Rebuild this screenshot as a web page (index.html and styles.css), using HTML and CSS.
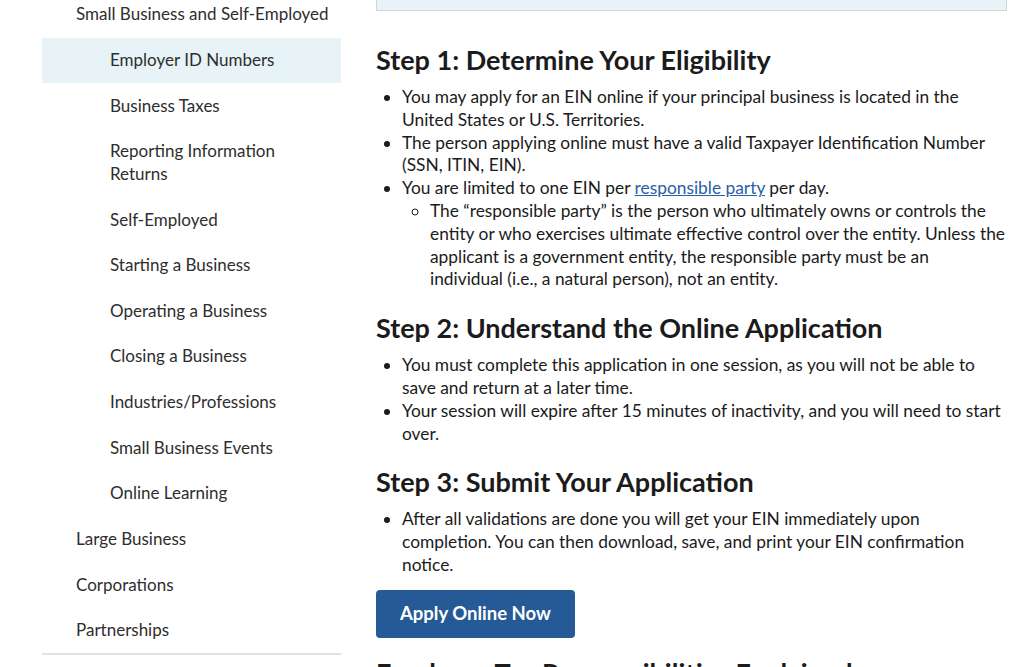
FILE: index.html
```html
<!DOCTYPE html>
<html lang="en">
<head>
    <meta charset="UTF-8">
    <meta name="viewport" content="width=device-width, initial-scale=1.0">
    <title>Employer ID Numbers</title>
    <link rel="stylesheet" href="styles.css">
</head>
<body>
    <div class="page">
        <nav class="sidenav">
            <ul>
                <li><a href="#">Small Business and Self-Employed</a>
                    <ul class="subnav">
                        <li class="current"><a href="#">Employer ID Numbers</a></li>
                        <li><a href="#">Business Taxes</a></li>
                        <li><a href="#">Reporting Information Returns</a></li>
                        <li><a href="#">Self-Employed</a></li>
                        <li><a href="#">Starting a Business</a></li>
                        <li><a href="#">Operating a Business</a></li>
                        <li><a href="#">Closing a Business</a></li>
                        <li><a href="#">Industries/Professions</a></li>
                        <li><a href="#">Small Business Events</a></li>
                        <li><a href="#">Online Learning</a></li>
                    </ul>
                </li>
                <li><a href="#">Large Business</a></li>
                <li><a href="#">Corporations</a></li>
                <li><a href="#">Partnerships</a></li>
            </ul>
        </nav>

        <main class="content">
            <div class="notice"></div>

            <h2>Step 1: Determine Your Eligibility</h2>
            <ul>
                <li>You may apply for an EIN online if your principal business is located in the United States or U.S. Territories.</li>
                <li>The person applying online must have a valid Taxpayer Identification Number (SSN, ITIN, EIN).</li>
                <li>You are limited to one EIN per <a href="#">responsible party</a> per day.
                    <ul>
                        <li>The “responsible party” is the person who ultimately owns or controls the entity or who exercises ultimate effective control over the entity. Unless the applicant is a government entity, the responsible party must be an individual (i.e., a natural person), not an entity.</li>
                    </ul>
                </li>
            </ul>

            <h2>Step 2: Understand the Online Application</h2>
            <ul>
                <li>You must complete this application in one session, as you will not be able to save and return at a later time.</li>
                <li>Your session will expire after 15 minutes of inactivity, and you will need to start over.</li>
            </ul>

            <h2>Step 3: Submit Your Application</h2>
            <ul>
                <li>After all validations are done you will get your EIN immediately upon completion. You can then download, save, and print your EIN confirmation notice.</li>
            </ul>

            <a class="button" href="#">Apply Online Now</a>

            <h2>Employer Tax Responsibilities Explained</h2>
        </main>
    </div>
</body>
</html>
```

FILE: styles.css
```css
body {
    margin: 0;
    font-family: Lato, "Open Sans", sans-serif;
    font-size: 17px;
    line-height: 22.8px;
    color: #1b1b1b;
    background-color: #fff;
    overflow: hidden;
}
.page {
    display: flex;
    align-items: flex-start;
    margin-top: -9px;
}
.sidenav {
    margin-top: 1px;
    margin-left: 42px;
    width: 299px;
    flex-shrink: 0;
    border-bottom: 2px solid #dfe1e2;
}
.sidenav ul {
    list-style: none;
    margin: 0;
    padding: 0;
}
.sidenav a {
    display: block;
    padding: 11.42px 0 11.42px 34px;
    color: #2e2e2e;
    text-decoration: none;
    white-space: nowrap;
}
.sidenav .subnav a {
    padding-left: 68px;
    padding-right: 40px;
    white-space: normal;
}
.sidenav .current a {
    background-color: #e7f3f6;
}
.content {
    margin-left: 35px;
    width: 631px;
    font-size: 17.35px;
}
.notice {
    height: 19px;
    background-color: #e7f3f6;
    border: 1px solid #cfd6da;
    border-top: none;
}
h2 {
    font-size: 27px;
    line-height: 35px;
    font-weight: 700;
    margin: 31px 0 9px;
    color: #1b1b1b;
}
.content ul {
    margin: 0;
    padding-left: 26px;
}
.content ul ul {
    padding-left: 28px;
    margin-right: 1.5px;
    list-style-type: circle;
}
.content ul + h2 {
    margin-top: 19px;
}
.content a {
    color: #2a5ea8;
}
.content .button {
    display: inline-block;
    margin-top: 13px;
    padding: 12.5px 24px;
    background-color: #255a96;
    color: #fff;
    font-size: 18.5px;
    font-weight: 700;
    text-decoration: none;
    border-radius: 4px;
}
.button + h2 {
    margin-top: 17px;
}
```
